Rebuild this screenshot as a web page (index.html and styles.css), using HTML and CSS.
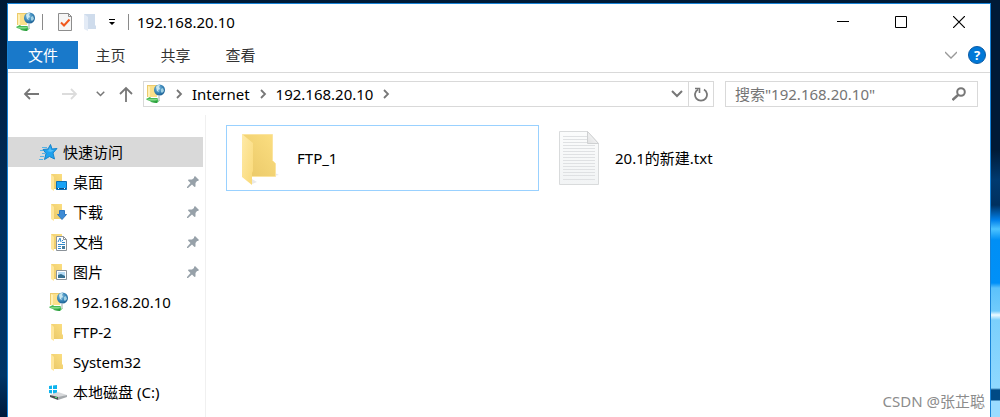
FILE: index.html
```html
<!DOCTYPE html>
<html lang="zh-CN">
<head>
    <meta charset="UTF-8">
    <meta name="viewport" content="width=device-width, initial-scale=1.0">
    <title>192.168.20.10</title>
    <link rel="stylesheet" href="styles.css">
</head>
<body>

    <!-- 图标 -->
    <svg class="icon-defs" aria-hidden="true">
        <defs>
            <linearGradient id="gradFolder" x1="0" y1="1" x2="1" y2="0">
                <stop offset="0" stop-color="#e9c766"/>
                <stop offset="1" stop-color="#fcdf82"/>
            </linearGradient>
            <linearGradient id="gradFlap" x1="0" y1="0" x2="1" y2="1">
                <stop offset="0" stop-color="#ffeaa8"/>
                <stop offset="1" stop-color="#f9d977"/>
            </linearGradient>
            <linearGradient id="gradPaper" x1="0" y1="0" x2="0" y2="1">
                <stop offset="0" stop-color="#fbfcfc"/>
                <stop offset="1" stop-color="#f2f4f5"/>
            </linearGradient>
            <linearGradient id="gradFold" x1="0" y1="1" x2="1" y2="0">
                <stop offset="0" stop-color="#e0e1e2"/>
                <stop offset="1" stop-color="#ffffff"/>
            </linearGradient>
            <radialGradient id="gradGlobe" cx="0.4" cy="0.35" r="0.7">
                <stop offset="0" stop-color="#8cc3e2"/>
                <stop offset="0.6" stop-color="#3583b6"/>
                <stop offset="1" stop-color="#1b5b8e"/>
            </radialGradient>
            <symbol id="folder" viewBox="0 0 20 20">
                <path d="M2 2h11v10l1 1v4H2z" fill="url(#gradFolder)"/>
                <path d="M2 2l3 3v14l-3-2z" fill="#ffe69a"/>
            </symbol>
            <symbol id="net" viewBox="0 0 20 20">
                <path d="M1 1h10v12H1z" fill="#fbe08a"/>
                <path d="M1 1h10v1H2v11H1z" fill="#eccb6c"/>
                <path d="M2 2l2 1v11l-2-1z" fill="#fff0b5"/>
                <circle cx="13.500" cy="6" r="5.500" fill="url(#gradGlobe)"/>
                <path d="M10 3c1-2 3-2 4-2l-1 2 1 2-2 1 1 2-2-1z" fill="#c8e6f0"/>
                <path d="M15 5l2-1 1 3-2 2-1-1z" fill="#9fd0e4"/>
                <path d="M0 15l4-2 1 1h6l3 2-3 3-6-1-1-1-3-1z" fill="#46b955"/>
                <path d="M1 15h12l-4 1.500H4z" fill="#84d987"/>
                <path d="M5 18l6-1v2z" fill="#289b3a"/>
                <path d="M12 12h2v4l-2 1z" fill="#cfd6d4"/>
            </symbol>
            <symbol id="pin" viewBox="0 0 14 14">
                <path d="M9 1l4 4-1 1h-1L9.500 8v3.500l-1 .5-2.500-2.500L2 13l-1 0v-1l3.500-4L2 5.500 2.500 4.500H6L8 3V2z" fill="#97a1a9"/>
            </symbol>
            <symbol id="chevronRight" viewBox="0 0 8 10">
                <path d="M2 1l4 4-4 4" fill="none" stroke="#777" stroke-width="1.800"/>
            </symbol>
            <symbol id="chevronDown" viewBox="0 0 12 8">
                <path d="M1 1l5 5 5-5" fill="none" stroke="currentColor" stroke-width="2"/>
            </symbol>
            <symbol id="arrow" viewBox="0 0 16 14">
                <path d="M16 7H2M7 2L2 7l5 5" fill="none" stroke="currentColor" stroke-width="1.800"/>
            </symbol>
        </defs>
    </svg>

    <div class="window">
        <!-- 标题栏 -->
        <header class="title-bar">
            <svg class="icon"><use href="#net"/></svg>
            <span class="divider"></span>
            <div class="quick-tools">
                <button class="tool" aria-label="属性">
                    <svg width="14" height="18" viewBox="0 0 14 18">
                        <path d="M.5.5h10l3 3v14H.5z" fill="#f5f5f5" stroke="#8d8d8d"/>
                        <path d="M10.500.5v3h3" fill="none" stroke="#8d8d8d"/>
                        <path d="M3 9.500l3 3 5.500-6" fill="none" stroke="#f1581d" stroke-width="2"/>
                    </svg>
                </button>
                <button class="tool" aria-label="新建文件夹">
                    <svg width="12" height="18" viewBox="0 0 12 18">
                        <path d="M0 1h11v11l1 1v3H0z" fill="#cfdcec"/>
                        <path d="M0 1l4 3v14l-4-2z" fill="#e3ebf6"/>
                    </svg>
                </button>
                <button class="tool" aria-label="自定义快速访问工具栏">
                    <svg width="8" height="8" viewBox="0 0 8 8">
                        <path d="M1 1h6v1H1zM1 4h6L4 7z" fill="#000"/>
                    </svg>
                </button>
            </div>
            <span class="divider"></span>
            <h1 class="title">192.168.20.10</h1>
            <div class="window-buttons">
                <button class="window-button" aria-label="最小化">
                    <svg width="12" height="12" viewBox="0 0 12 12"><path d="M0 5.500h12" stroke="#000"/></svg>
                </button>
                <button class="window-button" aria-label="最大化">
                    <svg width="12" height="12" viewBox="0 0 12 12"><path d="M.5.5h11v11H.5z" fill="none" stroke="#000"/></svg>
                </button>
                <button class="window-button" aria-label="关闭">
                    <svg width="12" height="12" viewBox="0 0 12 12"><path d="M0 0l12 12M12 0L0 12" stroke="#000" stroke-width="1.200"/></svg>
                </button>
            </div>
        </header>

        <!-- 选项卡 -->
        <nav class="ribbon">
            <button class="tab tab-file">文件</button>
            <button class="tab">主页</button>
            <button class="tab">共享</button>
            <button class="tab">查看</button>
            <div class="ribbon-end">
                <button class="tool expand" aria-label="展开功能区">
                    <svg width="12" height="8" viewBox="0 0 12 8"><path d="M0 1l6 6 6-6" fill="none" stroke="currentColor" stroke-width="1.300"/></svg>
                </button>
                <button class="help" aria-label="帮助">?</button>
            </div>
        </nav>

        <!-- 地址栏 -->
        <div class="address-row">
            <div class="nav-buttons">
                <button class="tool back" aria-label="后退"><svg width="16" height="14"><use href="#arrow"/></svg></button>
                <button class="tool forward" aria-label="前进"><svg class="flip" width="16" height="14"><use href="#arrow"/></svg></button>
                <button class="tool recent" aria-label="最近位置"><svg width="9" height="6"><use href="#chevronDown"/></svg></button>
                <button class="tool up" aria-label="上移">
                    <svg width="14" height="16" viewBox="0 0 14 16"><path d="M7 16V2M1 8l6-6 6 6" fill="none" stroke="currentColor" stroke-width="1.800"/></svg>
                </button>
            </div>
            <div class="address">
                <svg class="icon"><use href="#net"/></svg>
                <svg class="crumb-arrow"><use href="#chevronRight"/></svg>
                <a class="crumb" href="#">Internet</a>
                <svg class="crumb-arrow"><use href="#chevronRight"/></svg>
                <a class="crumb" href="#">192.168.20.10</a>
                <svg class="crumb-arrow"><use href="#chevronRight"/></svg>
                <button class="tool address-drop" aria-label="以前的位置"><svg width="12" height="8"><use href="#chevronDown"/></svg></button>
                <button class="tool refresh" aria-label="刷新">
                    <svg width="14" height="15" viewBox="0 0 14 15">
                        <path d="M10 2.500A6 6 0 1 1 4 2.500" fill="none" stroke="#777" stroke-width="1.800"/>
                        <path d="M1 1.500h4.500V6" fill="none" stroke="#777" stroke-width="1.600"/>
                    </svg>
                </button>
            </div>
            <div class="search">
                <input class="search-input" type="text" aria-label="搜索" placeholder="搜索&quot;192.168.20.10&quot;">
                <svg width="14" height="14" viewBox="0 0 14 14">
                    <circle cx="9" cy="5" r="3.800" fill="none" stroke="#777" stroke-width="2"/>
                    <path d="M6 8l-5.500 5" stroke="#777" stroke-width="2.400"/>
                </svg>
            </div>
        </div>

        <div class="main">
            <!-- 导航窗格 -->
            <aside class="sidebar">
                <a class="side-item side-head" href="#">
                    <svg class="icon" viewBox="0 0 20 20">
                        <path d="M11.500 2.500l1.500 4.500 5-.5-4 4.500 1.500 6-5-2.500-5 3 1.500-6L4 7.500l5-.5z" fill="#1fa2ee" stroke="#1784cc"/>
                        <path d="M11 5l1 3 3 0-3 2-4-1 2-1z" fill="#53bdf8"/>
                        <path d="M3 5.500h5M1 8.500h3M3 11.500h3M1 14.500h4M0 17.500h4" stroke="#58b3e5"/>
                    </svg>
                    <span>快速访问</span>
                </a>
                <a class="side-item" href="#">
                    <svg class="icon" viewBox="0 0 20 20">
                        <use href="#folder" width="20" height="20"/>
                        <path d="M7.500 9.500h10v8h-10z" fill="#18a3f5" stroke="#0c6fb5"/>
                        <path d="M8 16.500h9" stroke="#0a4f87"/>
                        <path d="M9 16.500h1M15 16.500h1" stroke="#fff"/>
                    </svg>
                    <span>桌面</span>
                    <svg class="pin"><use href="#pin"/></svg>
                </a>
                <a class="side-item" href="#">
                    <svg class="icon" viewBox="0 0 20 20">
                        <use href="#folder" width="20" height="20"/>
                        <path d="M10.500 8.500h5v4h2L13 17.500 8.500 12.500h2z" fill="#3d8bd5" stroke="#2f78c0"/>
                    </svg>
                    <span>下载</span>
                    <svg class="pin"><use href="#pin"/></svg>
                </a>
                <a class="side-item" href="#">
                    <svg class="icon" viewBox="0 0 20 20">
                        <use href="#folder" width="20" height="20"/>
                        <path d="M7.500 4.500h7l3 3v11h-10z" fill="#fff" stroke="#8b9299"/>
                        <path d="M14.500 4.500v3h3" fill="none" stroke="#8b9299"/>
                        <path d="M9 10l2-4 1 4M13 8.500h1M13 10.500h3M9 12.500h7M9 14.500h3M9 16.500h3" fill="none" stroke="#3289cb"/>
                        <path d="M13 14h3v3h-3z" fill="#477d9e"/>
                    </svg>
                    <span>文档</span>
                    <svg class="pin"><use href="#pin"/></svg>
                </a>
                <a class="side-item" href="#">
                    <svg class="icon" viewBox="0 0 20 20">
                        <use href="#folder" width="20" height="20"/>
                        <path d="M7.500 8.500h10v9h-10z" fill="#fff" stroke="#8b9299"/>
                        <path d="M9 10h7v6H9z" fill="#b7dcf5"/>
                        <path d="M9 13l3-1 4 2v2H9z" fill="#356f91"/>
                    </svg>
                    <span>图片</span>
                    <svg class="pin"><use href="#pin"/></svg>
                </a>
                <a class="side-item" href="#">
                    <svg class="icon"><use href="#net"/></svg>
                    <span>192.168.20.10</span>
                </a>
                <a class="side-item" href="#">
                    <svg class="icon"><use href="#folder"/></svg>
                    <span>FTP-2</span>
                </a>
                <a class="side-item" href="#">
                    <svg class="icon"><use href="#folder"/></svg>
                    <span>System32</span>
                </a>
                <a class="side-item" href="#">
                    <svg class="icon" viewBox="0 0 20 20">
                        <path d="M0 4l3-.5V7H0zM4 3.500L8 3v4H4zM0 8h3v3.500L0 11zM4 8h4v4l-4-.5z" fill="#0eb4ee"/>
                        <path d="M1 13l8-3 9 3-9 3z" fill="#d7d9db"/>
                        <path d="M1 13l8 2v3l-8-3z" fill="#4b5054"/>
                        <path d="M9 15l9-2v2l-9 3z" fill="#a5a9ac"/>
                        <path d="M6 15h2v1H6z" fill="#4be06a"/>
                    </svg>
                    <span>本地磁盘 (C:)</span>
                </a>
            </aside>

            <!-- 文件列表 -->
            <section class="files">
                <a class="file selected" href="#">
                    <svg class="file-icon" viewBox="0 0 40 56">
                        <path d="M32 46l6-1-6-3zM11 54l5-2-5-3z" fill="#e9e9e9"/>
                        <path d="M1.500 4.500h30v26l3 3v13h-33z" fill="url(#gradFolder)" stroke="#fbe4a0"/>
                        <path d="M1 4l11 9v28l-1 2v12L1 47z" fill="url(#gradFlap)"/>
                    </svg>
                    <span>FTP_1</span>
                </a>
                <a class="file" href="#">
                    <svg class="file-icon" viewBox="0 0 40 56">
                        <path d="M.5 1.500h28l11 12v41H.5z" fill="url(#gradPaper)" stroke="#d9dbdc"/>
                        <path d="M4 6.500h24M4 9.500h24M4 12.500h24M4 15.500h32M4 18.500h32M4 21.500h32M4 24.500h32M4 27.500h32M4 30.500h32M4 33.500h32M4 36.500h32M4 39.500h32M4 42.500h32M4 45.500h32M4 49.500h32" stroke="#dfe1e3"/>
                        <path d="M28.500 1.500v12h11z" fill="url(#gradFold)" stroke="#cfd1d2"/>
                    </svg>
                    <span>20.1的新建.txt</span>
                </a>
            </section>
        </div>
    </div>

    <div class="watermark">CSDN @张芷聪</div>

</body>
</html>
```
FILE: styles.css
```css
* {
    box-sizing: border-box;
}
body {
    margin: 0;
    padding: 3px 9px 0 7px;
    min-height: 100vh;
    overflow: hidden;
    font-family: "Noto Sans", "Noto Sans CJK SC", sans-serif;
    font-size: 15px;
    line-height: 20px;
    color: #000;
    background:
        linear-gradient(#001a36 0, #001a36 150px, #003a70 180px, #00305f 205px, #0080ea 220px, #4cc3ff 229px, #008ff5 240px, #0090f8 283px, #5cc2fb 288px, #70cbfc 311px, #eefaff 315px, #7bd0fc 320px, #8ed8ff 388px, #004a86 390px, #004a86 400px, #9adcff 401px) right top / 12px 417px no-repeat,
        linear-gradient(#001a36, #002f60 55%, #003567 90%, #001a3a);
}
button {
    margin: 0;
    padding: 0;
    border: none;
    background: none;
    font: inherit;
    color: inherit;
}
a {
    color: inherit;
    text-decoration: none;
}
svg {
    display: block;
    flex-shrink: 0;
}
.icon-defs {
    position: absolute;
    width: 0;
    height: 0;
}
.icon {
    width: 20px;
    height: 20px;
}
.flip {
    transform: scaleX(-1);
}
.window {
    display: flex;
    flex-direction: column;
    min-height: calc(100vh - 3px);
    background: #fff;
    border: 1px solid #1883d7;
    border-bottom: none;
}

/* 标题栏 */
.title-bar {
    display: flex;
    align-items: center;
    height: 37px;
    padding: 0 2px 2px 8px;
}
.divider {
    width: 1px;
    height: 16px;
    margin-left: 6px;
    background: #8a8a8a;
}
.quick-tools {
    display: flex;
    align-items: center;
    gap: 12px;
    padding: 0 6px 0 15px;
}
.title {
    margin: 0 0 0 8px;
    font-size: 15px;
    font-weight: normal;
}
.window-buttons {
    display: flex;
    margin-left: auto;
}
.window-button {
    display: flex;
    align-items: center;
    justify-content: center;
    width: 58px;
    height: 34px;
}

/* 选项卡 */
.ribbon {
    display: flex;
    height: 32px;
    padding-bottom: 3px;
    border-bottom: 1px solid #d9d9d9;
}
.tab {
    width: 65px;
    color: #333;
}
.tab-file {
    width: 70px;
    background: #1979ca;
    color: #fff;
}
.ribbon-end {
    display: flex;
    align-items: center;
    gap: 11px;
    margin-left: auto;
    padding-right: 4px;
}
.expand {
    color: #999;
}
.help {
    width: 18px;
    height: 18px;
    border: 1px solid #0c5ba5;
    border-radius: 50%;
    background: #0078d7;
    color: #fff;
    font-size: 13px;
    font-weight: bold;
    line-height: 16px;
}

/* 地址栏 */
.address-row {
    display: flex;
    align-items: center;
    padding: 8px 12px 8px 15px;
}
.nav-buttons {
    display: flex;
    align-items: center;
    padding-right: 10px;
    color: #777;
}
.forward {
    margin-left: 23px;
    color: #dcdcdc;
}
.recent {
    margin-left: 18px;
}
.up {
    margin-left: 14px;
}
.address {
    display: flex;
    flex: 1;
    align-items: center;
    height: 26px;
    padding-left: 2px;
    border: 1px solid #d9d9d9;
}
.crumb-arrow {
    width: 8px;
    height: 10px;
    margin: 0 9px;
}
.address-drop {
    margin-left: auto;
    padding-right: 5px;
    color: #777;
}
.refresh {
    height: 24px;
    padding: 0 5px;
    border-left: 1px solid #d9d9d9;
}
.search {
    display: flex;
    align-items: center;
    width: 253px;
    height: 26px;
    margin-left: 11px;
    padding: 0 11px 0 9px;
    border: 1px solid #d9d9d9;
}
.search-input {
    flex: 1;
    min-width: 0;
    padding: 0;
    border: none;
    outline: none;
    background: none;
    font: inherit;
}
.search-input::placeholder {
    color: #757575;
    opacity: 1;
}

/* 导航窗格和文件列表 */
.main {
    display: flex;
    flex: 1;
}
.sidebar {
    width: 198px;
    padding: 22px 2px 0 0;
    border-right: 1px solid #f0f0f0;
}
.side-item {
    display: flex;
    align-items: center;
    gap: 4px;
    height: 30px;
    padding: 0 3px 0 41px;
    white-space: nowrap;
}
.side-head {
    padding-left: 31px;
    background: #d9d9d9;
}
.pin {
    width: 14px;
    height: 14px;
    margin-left: auto;
}
.files {
    display: grid;
    flex: 1;
    grid-template-columns: repeat(auto-fill, 313px);
    align-content: start;
    gap: 5px;
    padding: 10px 20px;
}
.file {
    display: flex;
    align-items: center;
    gap: 16px;
    height: 66px;
    padding-left: 14px;
    border: 1px solid transparent;
}
.file.selected {
    border-color: #99d1ff;
}
.file-icon {
    width: 40px;
    height: 56px;
}

.watermark {
    position: absolute;
    right: 15px;
    bottom: 6px;
    color: #8c8c8c;
}
```
